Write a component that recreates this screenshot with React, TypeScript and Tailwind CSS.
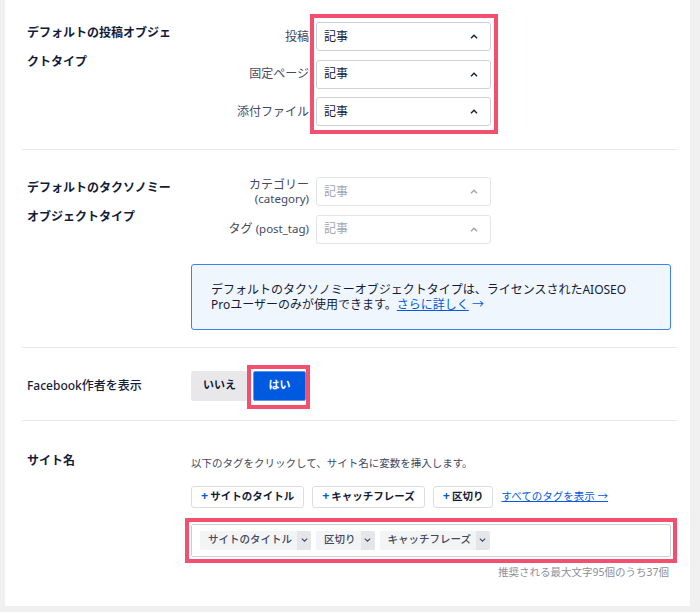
const font = { fontFamily: '"Noto Sans", "Noto Sans CJK JP", sans-serif' };

function ChevronUp({ muted = false }: { muted?: boolean }) {
  return (
    <svg width="8" height="5" viewBox="0 0 8 5" fill="none">
      <path d="M1 4.2 L4 1.2 L7 4.2" stroke={muted ? '#9ea3b0' : '#141b38'} strokeWidth="1.4" />
    </svg>
  );
}

function ChevronDown() {
  return (
    <svg width="7" height="4" viewBox="0 0 7 4" fill="none">
      <path d="M0.8 0.6 L3.5 3.2 L6.2 0.6" stroke="#434960" strokeWidth="1.1" />
    </svg>
  );
}

function Select({ disabled = false }: { disabled?: boolean }) {
  return (
    <div
      className={`flex h-[29px] w-[175px] items-center justify-between rounded-[3px] border bg-white pl-[7px] pr-[12px] text-[12px] ${
        disabled ? 'border-[#e3e4e8] text-[#a1a5b3]' : 'border-[#d0d1d7] text-[#141b38]'
      }`}
    >
      <span>記事</span>
      <ChevronUp muted={disabled} />
    </div>
  );
}

// red annotation frame laid over a control
function Frame({ className }: { className: string }) {
  return <div className={`pointer-events-none absolute border-4 border-[#f2506e] ${className}`} />;
}

function Chip({ label }: { label: string }) {
  return (
    <div className="flex h-[19px] items-stretch rounded-[2px] bg-[#f3f4f5] text-[10.5px] font-medium text-[#434960]">
      <span className="flex items-center pl-[8px] pr-[5px]">{label}</span>
      <span className="flex w-[14px] items-center justify-center rounded-r-[2px] bg-[#e5e6ea]">
        <ChevronDown />
      </span>
    </div>
  );
}

function TagButton({ label }: { label: string }) {
  return (
    <button className="flex h-[22px] items-center gap-[2px] rounded-[3px] border border-[#dcdde1] bg-white pl-[9px] pr-[9px] text-[10.5px] font-bold text-[#141b38]">
      <span className="text-[12.5px] leading-none text-[#005ae0]">+</span>
      {label}
    </button>
  );
}

export default function App() {
  return (
    <div className="min-h-screen bg-[#f0f0f1] pb-[7px] pl-[5px] pr-[10px] text-[#141b38]" style={font}>
      <div className="bg-white pl-[17px] pr-[13px]">
        {/* default post object type */}
        <div className="flex border-b border-[#e8e8eb] pb-[23px] pl-[5px] pr-[6px] pt-[18px]">
          <div className="w-[164px] shrink-0 pr-[12px] text-[12px] font-bold leading-[29px]">
            デフォルトの投稿オブジェクトタイプ
          </div>
          <div className="flex pt-[4px]">
            <div className="flex w-[125px] flex-col gap-[8.5px] pr-[7px] text-right text-[12px] text-[#434960]">
              <div className="flex h-[29px] items-center justify-end">投稿</div>
              <div className="flex h-[29px] items-center justify-end">固定ページ</div>
              <div className="flex h-[29px] items-center justify-end">添付ファイル</div>
            </div>
            <div className="relative flex flex-col gap-[8.5px]">
              <Select />
              <Select />
              <Select />
              <Frame className="-bottom-[8px] -left-[6px] -right-[7px] -top-[8px]" />
            </div>
          </div>
        </div>

        {/* default taxonomy object type */}
        <div className="flex border-b border-[#e8e8eb] pb-[17px] pl-[5px] pr-[6px] pt-[23px]">
          <div className="w-[164px] shrink-0 pr-[12px] text-[12px] font-bold leading-[29px]">
            デフォルトのタクソノミーオブジェクトタイプ
          </div>
          <div className="flex-1 pt-[4px]">
            <div className="flex">
              <div className="flex w-[125px] flex-col gap-[8.5px] pr-[7px] text-right text-[12px] text-[#434960]">
                <div className="flex h-[29px] flex-col items-end justify-center leading-[14px]">
                  <span>カテゴリー</span>
                  <span className="text-[11.5px]">(category)</span>
                </div>
                <div className="flex h-[29px] items-center justify-end">
                  タグ <span className="ml-[3px] text-[11.5px]">(post_tag)</span>
                </div>
              </div>
              <div className="flex flex-col gap-[8.5px]">
                <Select disabled />
                <Select disabled />
              </div>
            </div>
            <div className="mt-[20px] rounded-[3px] border border-[#3b82ea] bg-[#f0f6fe] px-[19px] py-[17px] text-[12px] leading-[15px] text-[#141b38]">
              デフォルトのタクソノミーオブジェクトタイプは、ライセンスされたAIOSEO
              <br />
              Proユーザーのみが使用できます。
              <a className="text-[#005ae0] underline">さらに詳しく</a>
              <span className="text-[#005ae0]"> →</span>
            </div>
          </div>
        </div>

        {/* facebook author */}
        <div className="flex items-center border-b border-[#e8e8eb] pb-[19px] pl-[5px] pr-[6px] pt-[23px]">
          <div className="w-[164px] shrink-0 text-[12px] font-medium">Facebook作者を表示</div>
          <div className="flex items-center gap-[5px]">
            <button className="h-[30px] w-[57px] rounded-[3px] bg-[#e8e8eb] text-[11px] font-bold text-[#141b38]">
              いいえ
            </button>
            <div className="relative">
              <button className="h-[30px] w-[53px] rounded-[2px] border border-[#5d95ec] bg-[#005ae0] text-[11px] font-bold text-white">
                はい
              </button>
              <Frame className="-bottom-[8px] -left-[6px] -right-[4px] -top-[6px]" />
            </div>
          </div>
        </div>

        {/* site name */}
        <div className="flex pb-[27px] pl-[5px] pr-[6px] pt-[25px]">
          <div className="w-[164px] shrink-0 text-[12px] font-bold leading-[29px]">サイト名</div>
          <div className="flex-1 pt-[9px]">
            <div className="text-[10.5px] leading-[16px] text-[#434960]">
              以下のタグをクリックして、サイト名に変数を挿入します。
            </div>
            <div className="mt-[15px] flex items-center gap-[8px]">
              <TagButton label="サイトのタイトル" />
              <TagButton label="キャッチフレーズ" />
              <TagButton label="区切り" />
              <a className="text-[10.5px] text-[#005ae0] underline">すべてのタグを表示 →</a>
            </div>
            <div className="relative mt-[16px]">
              <div className="flex h-[33px] items-center gap-[5px] rounded-[2px] border border-[#d0d1d7] bg-white pl-[8px]">
                <Chip label="サイトのタイトル" />
                <Chip label="区切り" />
                <Chip label="キャッチフレーズ" />
              </div>
              <Frame className="-bottom-[6px] -left-[6px] -right-[6px] -top-[6px]" />
            </div>
            <div className="mt-[8px] pr-[2px] text-right text-[10.5px] leading-[14px] text-[#8c8f9a]">
              推奨される最大文字95個のうち37個
            </div>
          </div>
        </div>
      </div>
    </div>
  );
}
